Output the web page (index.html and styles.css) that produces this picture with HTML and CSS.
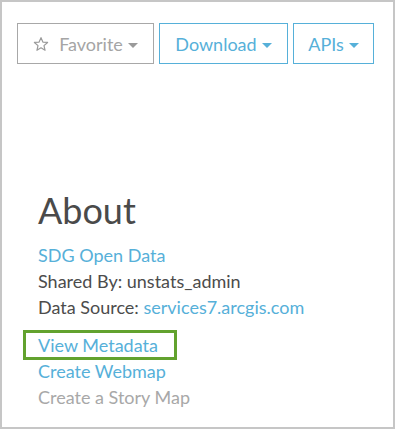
FILE: index.html
```html
<!DOCTYPE html>
<html lang="en">
<head>
    <meta charset="UTF-8">
    <meta name="viewport" content="width=device-width, initial-scale=1.0">
    <title>Item details</title>
    <link rel="stylesheet" href="styles.css">
</head>
<body>
    <div class="panel">
        <div class="actions">
            <button class="btn btn-muted btn-fav">
                <svg class="star" width="16" height="16" viewBox="0 0 24 24">
                    <path d="M12 2.5l2.8 6.6 7.1.6-5.4 4.7 1.6 7-6.1-3.7-6.1 3.7 1.6-7-5.4-4.7 7.1-.6z" fill="none" stroke="#9a9a9a" stroke-width="1.8" stroke-linejoin="round"/>
                </svg>
                Favorite<span class="caret"></span>
            </button>
            <button class="btn btn-download">Download<span class="caret"></span></button>
            <button class="btn btn-apis">APIs<span class="caret"></span></button>
        </div>

        <h1>About</h1>
        <div class="meta">
            <a href="#" class="link">SDG Open Data</a>
            <div>Shared By: unstats_admin</div>
            <div>Data Source: <a href="#" class="link">services7.arcgis.com</a></div>
        </div>

        <ul class="tools">
            <li><a href="#" class="link highlight">View Metadata</a></li>
            <li><a href="#" class="link">Create Webmap</a></li>
            <li><span class="disabled">Create a Story Map</span></li>
        </ul>
    </div>
</body>
</html>
```

FILE: styles.css
```css
* {
    box-sizing: border-box;
}
body {
    margin: 0;
    background: #fff;
    font-family: Lato, "Open Sans", sans-serif;
    color: #4c4c4c;
}
.panel {
    width: 395px;
    height: 429px;
    border: 2px solid #c6c6c6;
    padding: 21px 0 0 36px;
}
.actions {
    display: flex;
    gap: 5px;
    margin-left: -21px;
}
.btn {
    display: flex;
    align-items: center;
    justify-content: center;
    height: 41px;
    padding: 0;
    background: #fff;
    border: 1px solid #56b0d9;
    color: #56b0d9;
    font-family: inherit;
    font-size: 18px;
    cursor: pointer;
}
.btn-fav {
    width: 137px;
}
.btn-download {
    width: 129px;
}
.btn-apis {
    width: 81px;
}
.btn-muted {
    border-color: #a8a8a8;
    color: #a5a5a5;
}
.star {
    margin-right: 10px;
}
.caret {
    display: inline-block;
    margin-left: 5px;
    margin-top: 3px;
    border-top: 5px solid currentColor;
    border-left: 5px solid transparent;
    border-right: 5px solid transparent;
}
.btn-muted .caret {
    border-top-color: #9a9a9a;
}
h1 {
    margin: 125px 0 0;
    font-size: 36px;
    font-weight: 400;
    line-height: 42px;
    color: #4a4a4a;
}
.meta {
    margin-top: 11px;
    font-size: 18px;
    line-height: 26px;
}
.meta a {
    display: block;
}
.meta div a {
    display: inline;
}
.link {
    color: #56b0d9;
    text-decoration: none;
}
.tools {
    list-style: none;
    margin: 12px 0 0;
    padding: 0;
    font-size: 18px;
    line-height: 26px;
}
.highlight {
    display: inline-block;
    line-height: 24px;
    padding: 0 16px 0 12px;
    margin-left: -12px;
    outline: 3px solid #62a22e;
}
.disabled {
    color: #a8a8a8;
}
```
